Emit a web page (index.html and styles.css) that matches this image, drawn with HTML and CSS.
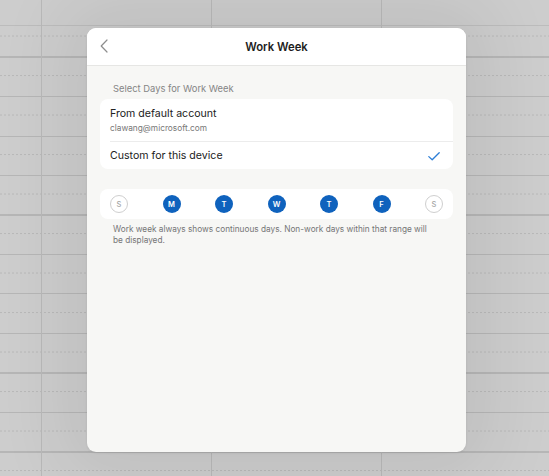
FILE: index.html
```html
<!DOCTYPE html>
<html lang="en">
<head>
<meta charset="utf-8">
<title>Work Week</title>
<link rel="stylesheet" href="styles.css">
</head>
<body>
<div class="grid-dashes"></div>
<div class="modal">
  <header class="modal-header">
    <button class="back" aria-label="Back">
      <svg width="8" height="14" viewBox="0 0 8 14"><path d="M7 1 L1.2 7 L7 13" fill="none" stroke="#8e8e8e" stroke-width="1.2" stroke-linecap="round" stroke-linejoin="round"/></svg>
    </button>
    <h1 class="title">Work Week</h1>
  </header>
  <main class="modal-body">
    <div class="section-label">Select Days for Work Week</div>
    <div class="card options">
      <div class="option option-account">
        <div class="option-title">From default account</div>
        <div class="option-sub">clawang@microsoft.com</div>
      </div>
      <div class="option option-custom">
        <div class="option-title">Custom for this device</div>
        <svg class="check" width="12" height="9" viewBox="0 0 12 9"><path d="M0.8 4.6 L4.2 7.8 L11.2 0.8" fill="none" stroke="#2d7ed6" stroke-width="1.3" stroke-linecap="round" stroke-linejoin="round"/></svg>
      </div>
    </div>
    <div class="card days">
      <span class="day off">S</span>
      <span class="day on">M</span>
      <span class="day on">T</span>
      <span class="day on">W</span>
      <span class="day on">T</span>
      <span class="day on">F</span>
      <span class="day off">S</span>
    </div>
    <p class="note">Work week always shows continuous days. Non-work days within that range will be displayed.</p>
  </main>
</div>
</body>
</html>
```

FILE: styles.css
```css
html, body {
  margin: 0;
  height: 100%;
}
body {
  position: relative;
  width: 549px;
  height: 476px;
  overflow: hidden;
  box-sizing: border-box;
  padding: 28px 0 0 87px;
  font-family: Inter, "Liberation Sans", sans-serif;
  background-color: #cdcdcd;
  background-image:
    linear-gradient(to right, transparent 41px, #b9b9b9 41px, #b9b9b9 42px, transparent 42px, transparent 211px, #b9b9b9 211px, #b9b9b9 212px, transparent 212px, transparent 381px, #b9b9b9 381px, #b9b9b9 382px, transparent 382px),
    linear-gradient(to bottom, transparent 25.5px, #bcbcbc 25.5px, #bcbcbc 26.5px, transparent 26.5px),
    repeating-linear-gradient(to bottom, transparent 0, transparent 16.5px, #b6b6b6 16.5px, #b6b6b6 17.5px, transparent 17.5px, transparent 39.5px);
  background-repeat: no-repeat, no-repeat, no-repeat;
  background-size: 100% 100%, 100% 100%, 100% 437px;
  background-position: 0 0, 0 0, 0 39.5px;
}
.grid-dashes {
  position: absolute;
  inset: 0;
  background-image: repeating-linear-gradient(to bottom, transparent 0, transparent 35.75px, #b8b8b8 35.75px, #b8b8b8 36.75px, transparent 36.75px, transparent 39.5px);
  background-size: 100% 39.5px;
  background-position: 0 0;
  -webkit-mask-image: repeating-linear-gradient(to right, #000 0, #000 2px, transparent 2px, transparent 4px);
  mask-image: repeating-linear-gradient(to right, #000 0, #000 2px, transparent 2px, transparent 4px);
}
.modal {
  position: relative;
  width: 379px;
  height: 424px;
  border-radius: 9px;
  overflow: hidden;
  background: #f7f7f5;
  box-shadow: 0 0 70px 25px rgba(0, 0, 0, 0.07), 0 1px 3px rgba(0, 0, 0, 0.08);
  display: flex;
  flex-direction: column;
}
.modal-header {
  position: relative;
  height: 37px;
  flex: none;
  background: #ffffff;
  border-bottom: 1px solid #e6e6e4;
  display: flex;
  align-items: center;
  justify-content: center;
}
.back {
  position: absolute;
  left: 13px;
  top: 11px;
  padding: 0;
  border: 0;
  background: none;
  display: flex;
}
.title {
  margin: 0;
  font-size: 11.3px;
  font-weight: 600;
  color: #1d1d1d;
}
.modal-body {
  padding: 16px 13px 0 13px;
  display: flex;
  flex-direction: column;
}
.section-label {
  padding-left: 13px;
  font-size: 9.4px;
  line-height: 14px;
  color: #858585;
  margin-bottom: 3px;
}
.card {
  background: #ffffff;
  border-radius: 8px;
}
.options {
  display: flex;
  flex-direction: column;
}
.option {
  margin-left: 10px;
  padding-right: 13px;
}
.option-account {
  height: 42px;
  border-bottom: 1px solid #ececec;
  display: flex;
  flex-direction: column;
  justify-content: center;
}
.option-title {
  font-size: 10.6px;
  line-height: 14px;
  color: #222222;
}
.option-sub {
  font-size: 8.3px;
  line-height: 12px;
  color: #777777;
  margin-top: 1px;
}
.option-custom {
  height: 27px;
  display: flex;
  align-items: center;
  justify-content: space-between;
}
.check {
  display: block;
  margin-top: 1px;
}
.days {
  margin-top: 20px;
  height: 30px;
  padding: 0 10px;
  display: flex;
  align-items: center;
  justify-content: space-between;
}
.day {
  width: 18px;
  height: 18px;
  box-sizing: border-box;
  border-radius: 50%;
  display: flex;
  align-items: center;
  justify-content: center;
  font-size: 7.5px;
  font-weight: 600;
}
.day.on {
  background: #0f62bd;
  color: #ffffff;
}
.day.off {
  border: 1px solid #cfcfcf;
  color: #a6a6a6;
  font-weight: 500;
}
.note {
  margin: 5px 0 0 0;
  padding: 0 22px 0 13px;
  font-size: 8.25px;
  line-height: 11px;
  color: #757575;
}
```
